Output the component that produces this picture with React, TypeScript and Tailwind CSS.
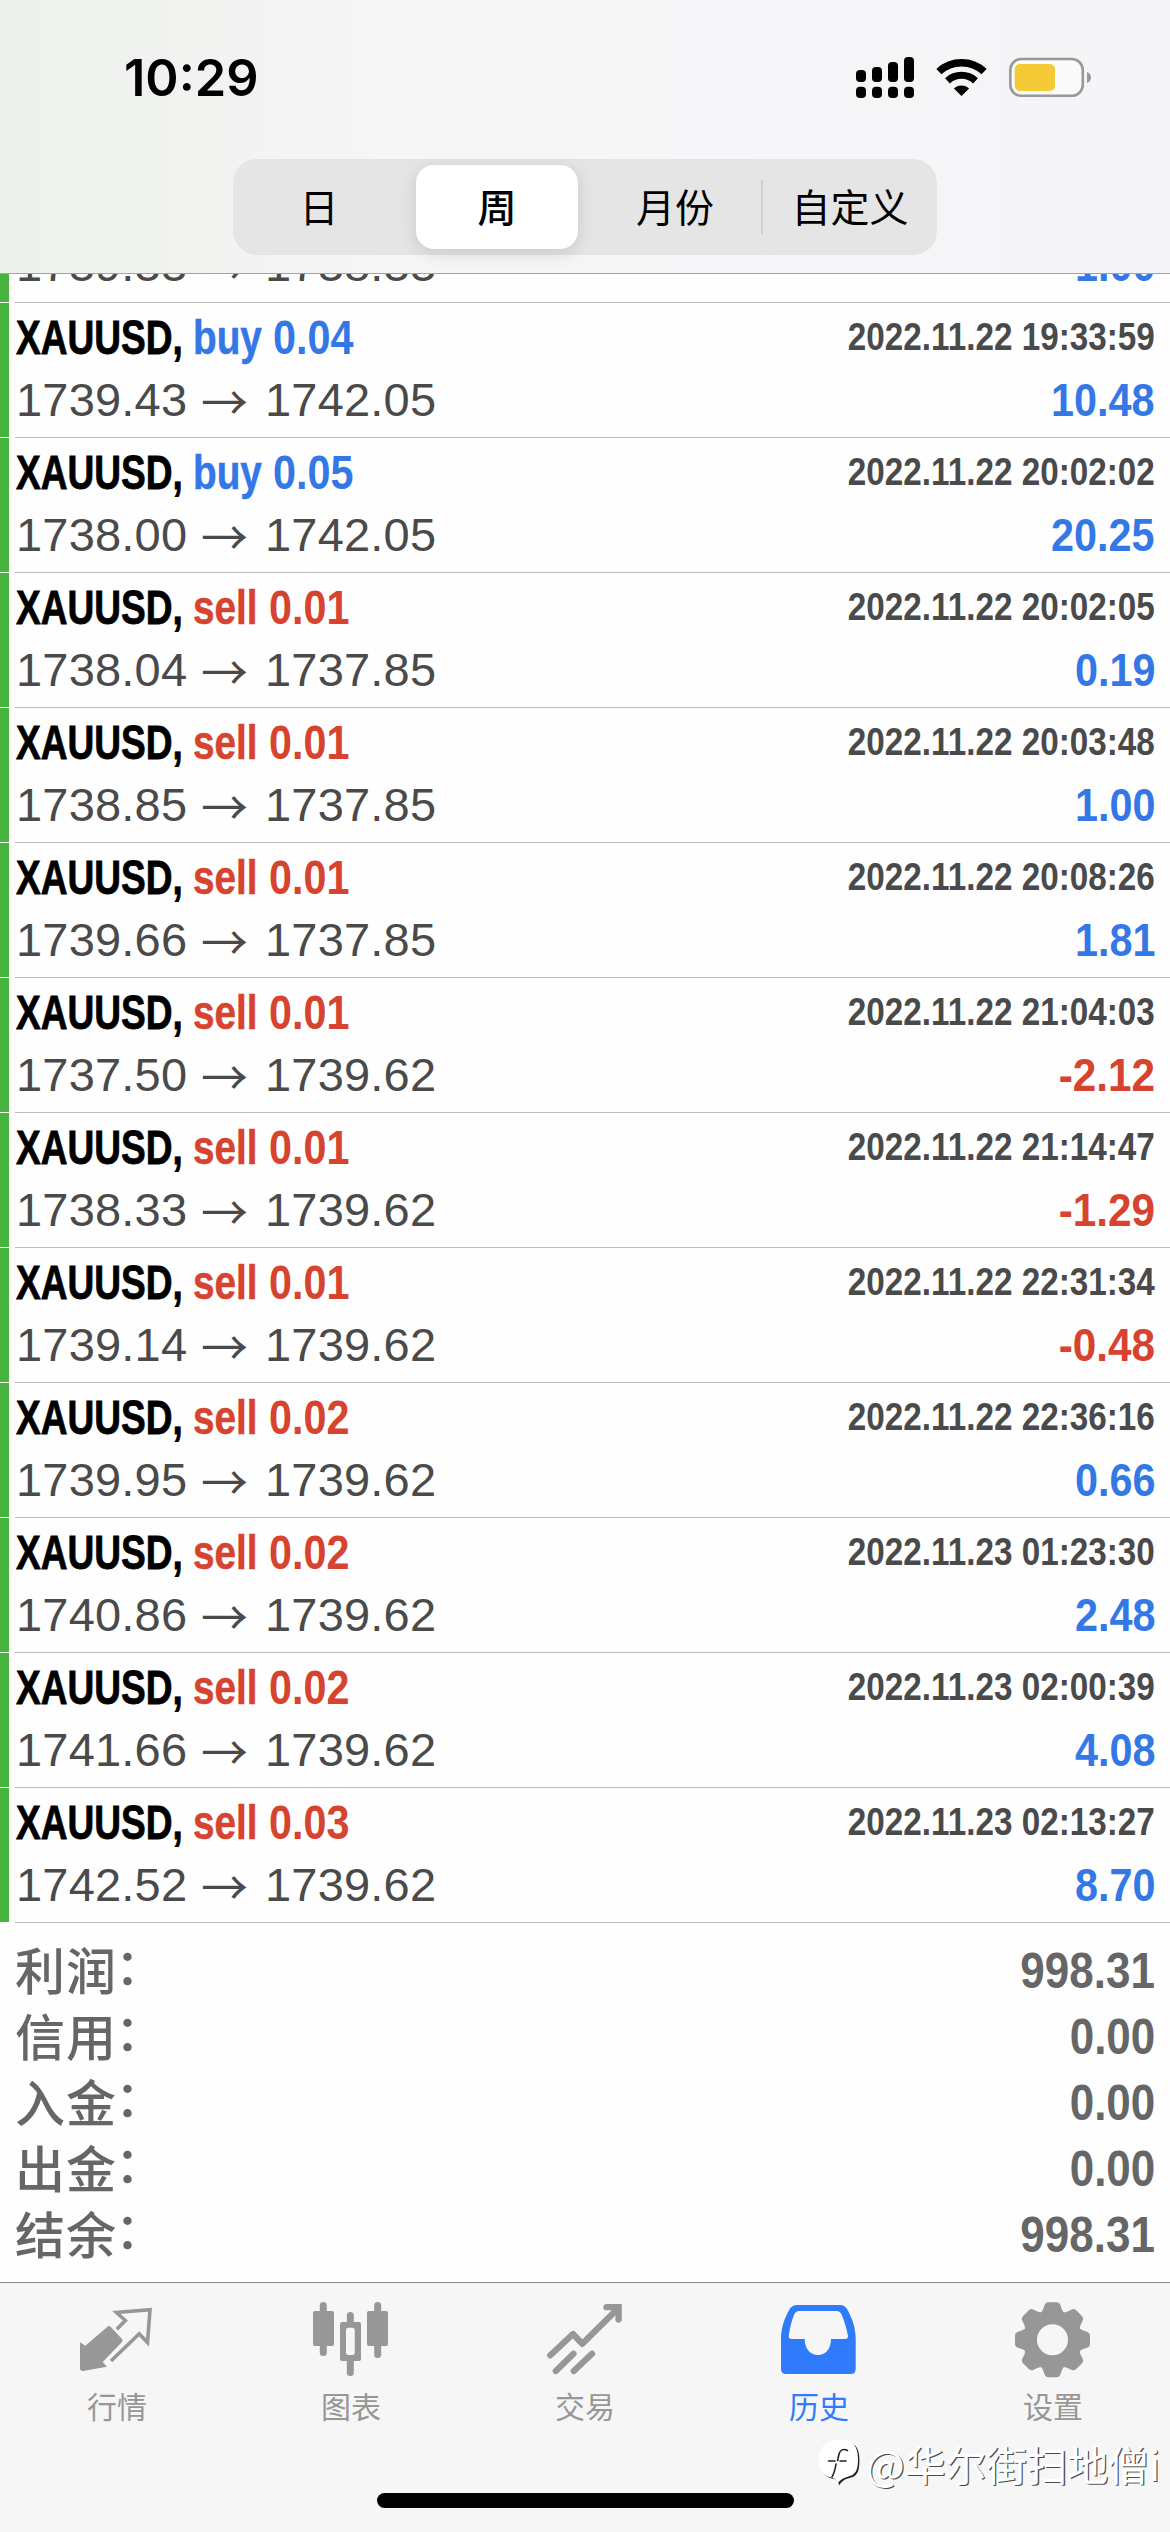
import type { ReactNode } from "react";

type Deal = {
  side: "buy" | "sell";
  lots: string;
  open: string;
  close: string;
  time: string;
  profit: string;
};

const deals: Deal[] = [
  { side: "buy", lots: "0.04", open: "1739.43", close: "1742.05", time: "2022.11.22 19:33:59", profit: "10.48" },
  { side: "buy", lots: "0.05", open: "1738.00", close: "1742.05", time: "2022.11.22 20:02:02", profit: "20.25" },
  { side: "sell", lots: "0.01", open: "1738.04", close: "1737.85", time: "2022.11.22 20:02:05", profit: "0.19" },
  { side: "sell", lots: "0.01", open: "1738.85", close: "1737.85", time: "2022.11.22 20:03:48", profit: "1.00" },
  { side: "sell", lots: "0.01", open: "1739.66", close: "1737.85", time: "2022.11.22 20:08:26", profit: "1.81" },
  { side: "sell", lots: "0.01", open: "1737.50", close: "1739.62", time: "2022.11.22 21:04:03", profit: "-2.12" },
  { side: "sell", lots: "0.01", open: "1738.33", close: "1739.62", time: "2022.11.22 21:14:47", profit: "-1.29" },
  { side: "sell", lots: "0.01", open: "1739.14", close: "1739.62", time: "2022.11.22 22:31:34", profit: "-0.48" },
  { side: "sell", lots: "0.02", open: "1739.95", close: "1739.62", time: "2022.11.22 22:36:16", profit: "0.66" },
  { side: "sell", lots: "0.02", open: "1740.86", close: "1739.62", time: "2022.11.23 01:23:30", profit: "2.48" },
  { side: "sell", lots: "0.02", open: "1741.66", close: "1739.62", time: "2022.11.23 02:00:39", profit: "4.08" },
  { side: "sell", lots: "0.03", open: "1742.52", close: "1739.62", time: "2022.11.23 02:13:27", profit: "8.70" },
];

const totals = [
  ["利润", "998.31"],
  ["信用", "0.00"],
  ["入金", "0.00"],
  ["出金", "0.00"],
  ["结余", "998.31"],
];

function StatusIcons() {
  return (
    <svg width="250" height="54" viewBox="0 0 250 54" aria-hidden="true">
      <g fill="#000">
        <rect x="6" y="20" width="10" height="12" rx="4" />
        <rect x="22" y="17" width="10" height="15" rx="4" />
        <rect x="38" y="12" width="10" height="20" rx="4" />
        <rect x="54" y="7" width="10" height="25" rx="4" />
        <rect x="6" y="36.7" width="10" height="11.3" rx="4" />
        <rect x="22" y="36.7" width="10" height="11.3" rx="4" />
        <rect x="38" y="36.7" width="10" height="11.3" rx="4" />
        <rect x="54" y="36.7" width="10" height="11.3" rx="4" />
      </g>
      <g transform="translate(111.5 46)" fill="none" stroke="#000">
        <path d="M-22.6 -24.4 A33.3 33.3 0 0 1 22.6 -24.4" strokeWidth="7.4" />
        <path d="M-14 -15.2 A20.7 20.7 0 0 1 14 -15.2" strokeWidth="7" />
        <path d="M0 0 L-7.6 -7.4 A10.8 10.8 0 0 1 7.6 -7.4 Z" fill="#000" stroke="none" />
      </g>
      <rect x="160.3" y="9" width="72.5" height="36.8" rx="11" fill="#fafafa" stroke="#98989a" strokeWidth="2.6" />
      <rect x="164.7" y="14" width="40.3" height="27" rx="5" fill="#f5ca37" />
      <path d="M237 22 Q241 23.5 241 27.5 Q241 31.5 237 33 Z" fill="#98989a" />
    </svg>
  );
}

const segments = ["日", "周", "月份", "自定义"];

function Segmented() {
  return (
    <div className="mx-auto mt-[49px] flex h-24 w-[704px] rounded-[24px] bg-[#e6e5e6] text-[39px] leading-[80px] text-black">
      {segments.map((label, i) =>
        i === 1 ? (
          <div
            key={label}
            className="mx-[7px] my-1.5 h-[84px] flex-1 rounded-[18px] bg-white text-center font-medium shadow-[0_4px_18px_rgba(0,0,0,0.13)]"
          >
            {label}
          </div>
        ) : (
          <div
            key={label}
            className={
              i === 3
                ? "my-[21px] w-[176px] border-l-2 border-[#cfcfd2] text-center leading-[50px]"
                : i === 2
                  ? "w-[176px] pt-1.5 pl-1 text-center"
                  : "w-[176px] pt-1.5 pr-1 text-center"
            }
          >
            {label}
          </div>
        )
      )}
    </div>
  );
}

function PriceLine({ open, close, profit }: { open: string; close: string; profit: string }) {
  const loss = profit.startsWith("-");
  return (
    <div className="flex h-[75px] justify-between text-[47px] leading-[76px] whitespace-nowrap">
      <div className="flex text-[#4a4a4a]">
        <span className="w-[185px] tracking-[0.2px]">{open}</span>
        <span className="w-[64px] [font-family:'Noto_Sans_CJK_SC',sans-serif]">→</span>
        <span className="tracking-[0.2px]">{close}</span>
      </div>
      <span
        className={
          loss
            ? "inline-block origin-right scale-x-[0.9] font-bold text-[#d6432f]"
            : "inline-block origin-right scale-x-[0.88] font-bold text-[#3478e6]"
        }
      >
        {profit}
      </span>
    </div>
  );
}

function DealRow({ deal }: { deal: Deal }) {
  const buy = deal.side === "buy";
  return (
    <div className="flex h-[135px] shrink-0 gap-1.5">
      <div className="h-[134px] w-[9px] bg-[#46b33f]" />
      <div className="h-[135px] flex-1 border-b border-[#bdbdbd] pt-[11px] pr-[15px] pl-px">
        <div className="flex h-12 justify-between font-bold whitespace-nowrap">
          <div className="flex text-[47.5px] leading-[48px]">
            <div className="w-[177px] text-black [-webkit-text-stroke:0.8px_#000]">
              <span className="inline-block origin-left scale-x-[0.78]">XAUUSD,</span>
            </div>
            <div
              className={
                buy
                  ? "w-[80px] text-[#3478e6] [-webkit-text-stroke:0.5px_#3478e6]"
                  : "w-[76px] text-[#d6432f] [-webkit-text-stroke:0.5px_#d6432f]"
              }
            >
              <span className="inline-block origin-left scale-x-[0.815]">{deal.side}</span>
            </div>
            <div className={buy ? "text-[#3478e6]" : "text-[#d6432f]"}>
              <span className="inline-block origin-left scale-x-[0.87]">{deal.lots}</span>
            </div>
          </div>
          <span className="inline-block origin-right scale-x-[0.875] text-[38px] leading-[46px] text-[#4a4a4a]">
            {deal.time}
          </span>
        </div>
        <PriceLine open={deal.open} close={deal.close} profit={deal.profit} />
      </div>
    </div>
  );
}

/* The deal that is scrolled halfway under the header: only its price line still shows. */
function ScrolledRow() {
  return (
    <div className="flex h-[29px] shrink-0 gap-1.5 overflow-hidden">
      <div className="h-7 w-[9px] bg-[#46b33f]" />
      <div className="flex h-[29px] flex-1 flex-col justify-end overflow-hidden border-b border-[#bdbdbd] pr-[15px] pl-px">
        <div className="shrink-0">
          <PriceLine open="1739.33" close="1738.33" profit="1.00" />
        </div>
      </div>
    </div>
  );
}

function QuotesIcon() {
  return (
    <>
      <path d="M3 42.3 L8.3 45.7 L30.5 26.8 Q32 25.3 33.5 26.8 L45 39 Q46 40.7 45 42 L25.7 62 L30 66.7 L6 70.9 Q3 71 3 68.5 Z" fill="currentColor" />
      <path d="M39.8 29.3 L48.3 20.5 L39.5 12.5 L73 9.7 L70.5 42.5 L62.2 33.8 L34 61" fill="none" stroke="currentColor" strokeWidth="3.6" />
    </>
  );
}

function ChartIcon() {
  return (
    <g fill="currentColor">
      <rect x="2" y="11" width="21" height="35" rx="2" />
      <rect x="8.8" y="2" width="7" height="54" rx="3.5" />
      <rect x="56" y="11" width="21" height="35" rx="2" />
      <rect x="63.2" y="2" width="7" height="56" rx="3.5" />
      <rect x="35.8" y="12" width="7" height="64" rx="3.5" />
      <rect x="29" y="22" width="21" height="39" rx="2" />
      <rect x="35" y="27.7" width="8.7" height="27.3" rx="2.5" fill="#f6f6f6" />
    </g>
  );
}

function TradeIcon() {
  return (
    <g fill="none" stroke="currentColor" strokeWidth="6.3" strokeLinecap="round">
      <path d="M5.3 55.3 L28 34 L37.3 43.8 L73 8.5" strokeLinejoin="round" />
      <path d="M61.5 7.2 H73.6 V19.5" />
      <path d="M10.8 71 L28.5 53.8" />
      <path d="M28.8 71 L47 53.8" />
    </g>
  );
}

function HistoryIcon() {
  return (
    <path
      fillRule="evenodd"
      fill="currentColor"
      d="M18 5 H61 Q65.5 5 68 9 C73.5 18.5 76.7 28 76.7 39 V69 Q76.7 74 71.7 74 H7 Q2 74 2 69 V39 C2 28 5.2 18.5 10.7 9 Q13.2 5 18 5 Z M20 11 Q16.6 11 15.2 14.5 C12.5 21 10.8 28 9.8 35.5 Q9.4 39 12.5 39 H25.7 C25.7 48.5 31 55 39 55 C47 55 52 48.5 52 39 H66.2 Q69.3 39 68.9 35.5 C67.5 28 65.5 21 62.5 14.5 Q61.1 11 57.7 11 Z"
    />
  );
}

const toothAngles = [0, 45, 90, 135, 180, 225, 270, 315];

function SettingsIcon() {
  return (
    <g transform="translate(39.5 39.7)" fill="currentColor">
      <circle r="22.5" fill="none" stroke="currentColor" strokeWidth="14" />
      {toothAngles.map((angle) => (
        <path
          key={angle}
          transform={`rotate(${angle})`}
          d="M-14 -25 C-9.5 -28 -9.3 -31 -8 -34.5 Q-7 -37.5 -4 -37.5 H4 Q7 -37.5 8 -34.5 C9.3 -31 9.5 -28 14 -25 Z"
        />
      ))}
    </g>
  );
}

const tabs: { label: string; icon: ReactNode; active?: boolean }[] = [
  { label: "行情", icon: <QuotesIcon /> },
  { label: "图表", icon: <ChartIcon /> },
  { label: "交易", icon: <TradeIcon /> },
  { label: "历史", icon: <HistoryIcon />, active: true },
  { label: "设置", icon: <SettingsIcon /> },
];

function TabBar() {
  return (
    <nav className="relative h-[250px] border-t border-[#8a8a8a] bg-[#f6f6f6]">
      <div className="grid grid-cols-5 pt-[17px]">
        {tabs.map((tab) => (
          <div
            key={tab.label}
            className={
              tab.active
                ? "flex flex-col items-center text-[#2f7bfb]"
                : "flex flex-col items-center text-[#979797]"
            }
          >
            <svg width="80" height="80" viewBox="0 0 80 80" aria-hidden="true">
              {tab.icon}
            </svg>
            <span className="mt-2.5 text-[30px] leading-[36px]">{tab.label}</span>
          </div>
        ))}
      </div>
      <div className="absolute bottom-6 left-[377px] h-[15px] w-[417px] rounded-full bg-black" />
      <div className="absolute top-[150px] left-[819px] flex items-center gap-[5px]">
        <svg width="42" height="48" viewBox="0 0 42 48" aria-hidden="true">
          <path d="M21 2 C34 1 39.5 7 39.5 20 C39.5 32 38 37 28 39 Q23 40 19 46 Q19 40 12 39 C3 37 1 30 1 20 C1 7 8 2 21 2 Z" fill="#222" transform="translate(0.9 0.5)" />
          <path d="M21 1 C34 0 39 7 39 20 C39 31 37 36 28 38 Q22 39.5 18 45 Q19 40 12 38.5 C2 36 0 30 0 20 C0 7 8 1 21 1 Z" fill="#fff" />
          <path d="M28.5 11.5 Q22 8.5 20 15 L18.6 21.5 M9.5 22 H16 M21 22 H27 M17 25 Q15.8 33 13 38" fill="none" stroke="#222" strokeWidth="1.6" strokeLinecap="round" />
        </svg>
        <span className="text-[41px] leading-[60px] tracking-[-0.3px] whitespace-nowrap text-white [text-shadow:1.3px_1.3px_0_rgba(0,0,0,0.7)] [font-family:'Noto_Sans_CJK_SC',sans-serif]">
          @华尔街扫地僧i
        </span>
      </div>
    </nav>
  );
}

export default function App() {
  return (
    <div className="flex h-[2532px] w-[1170px] flex-col overflow-hidden bg-[#fefefe] [font-family:'Liberation_Sans','Noto_Sans_CJK_SC',sans-serif]">
      <header className="h-[274px] shrink-0 border-b border-[#a3a3a3] bg-linear-to-r from-[#edf0ec] via-[#f6f6f6] via-35% to-[#f5f5f9] [font-family:'Noto_Sans_CJK_SC',sans-serif]">
        <div className="flex h-[110px] justify-between pt-[50px] pr-[70px] pl-[124px]">
          <span className="text-[50.5px] leading-[56px] font-semibold [font-family:Inter,sans-serif]">10:29</span>
          <StatusIcons />
        </div>
        <Segmented />
      </header>
      <main className="flex h-[1649px] shrink-0 flex-col">
        <ScrolledRow />
        {deals.map((deal) => (
          <DealRow key={deal.time} deal={deal} />
        ))}
      </main>
      <section className="h-[359px] shrink-0 pt-[15px] pr-[15px] pl-[15px] font-bold text-[#666]">
        {totals.map(([label, value]) => (
          <div key={label} className="flex h-[66px] justify-between leading-[66px]">
            <span className="text-[50px] leading-[60px] font-medium tracking-[1px] [font-family:'Noto_Sans_CJK_SC',sans-serif]">
              {label}
              <span className="inline-block -translate-x-0.5 -translate-y-[5px]">：</span>
            </span>
            <span className="origin-right scale-x-[0.88] text-[50px]">{value}</span>
          </div>
        ))}
      </section>
      <TabBar />
    </div>
  );
}
